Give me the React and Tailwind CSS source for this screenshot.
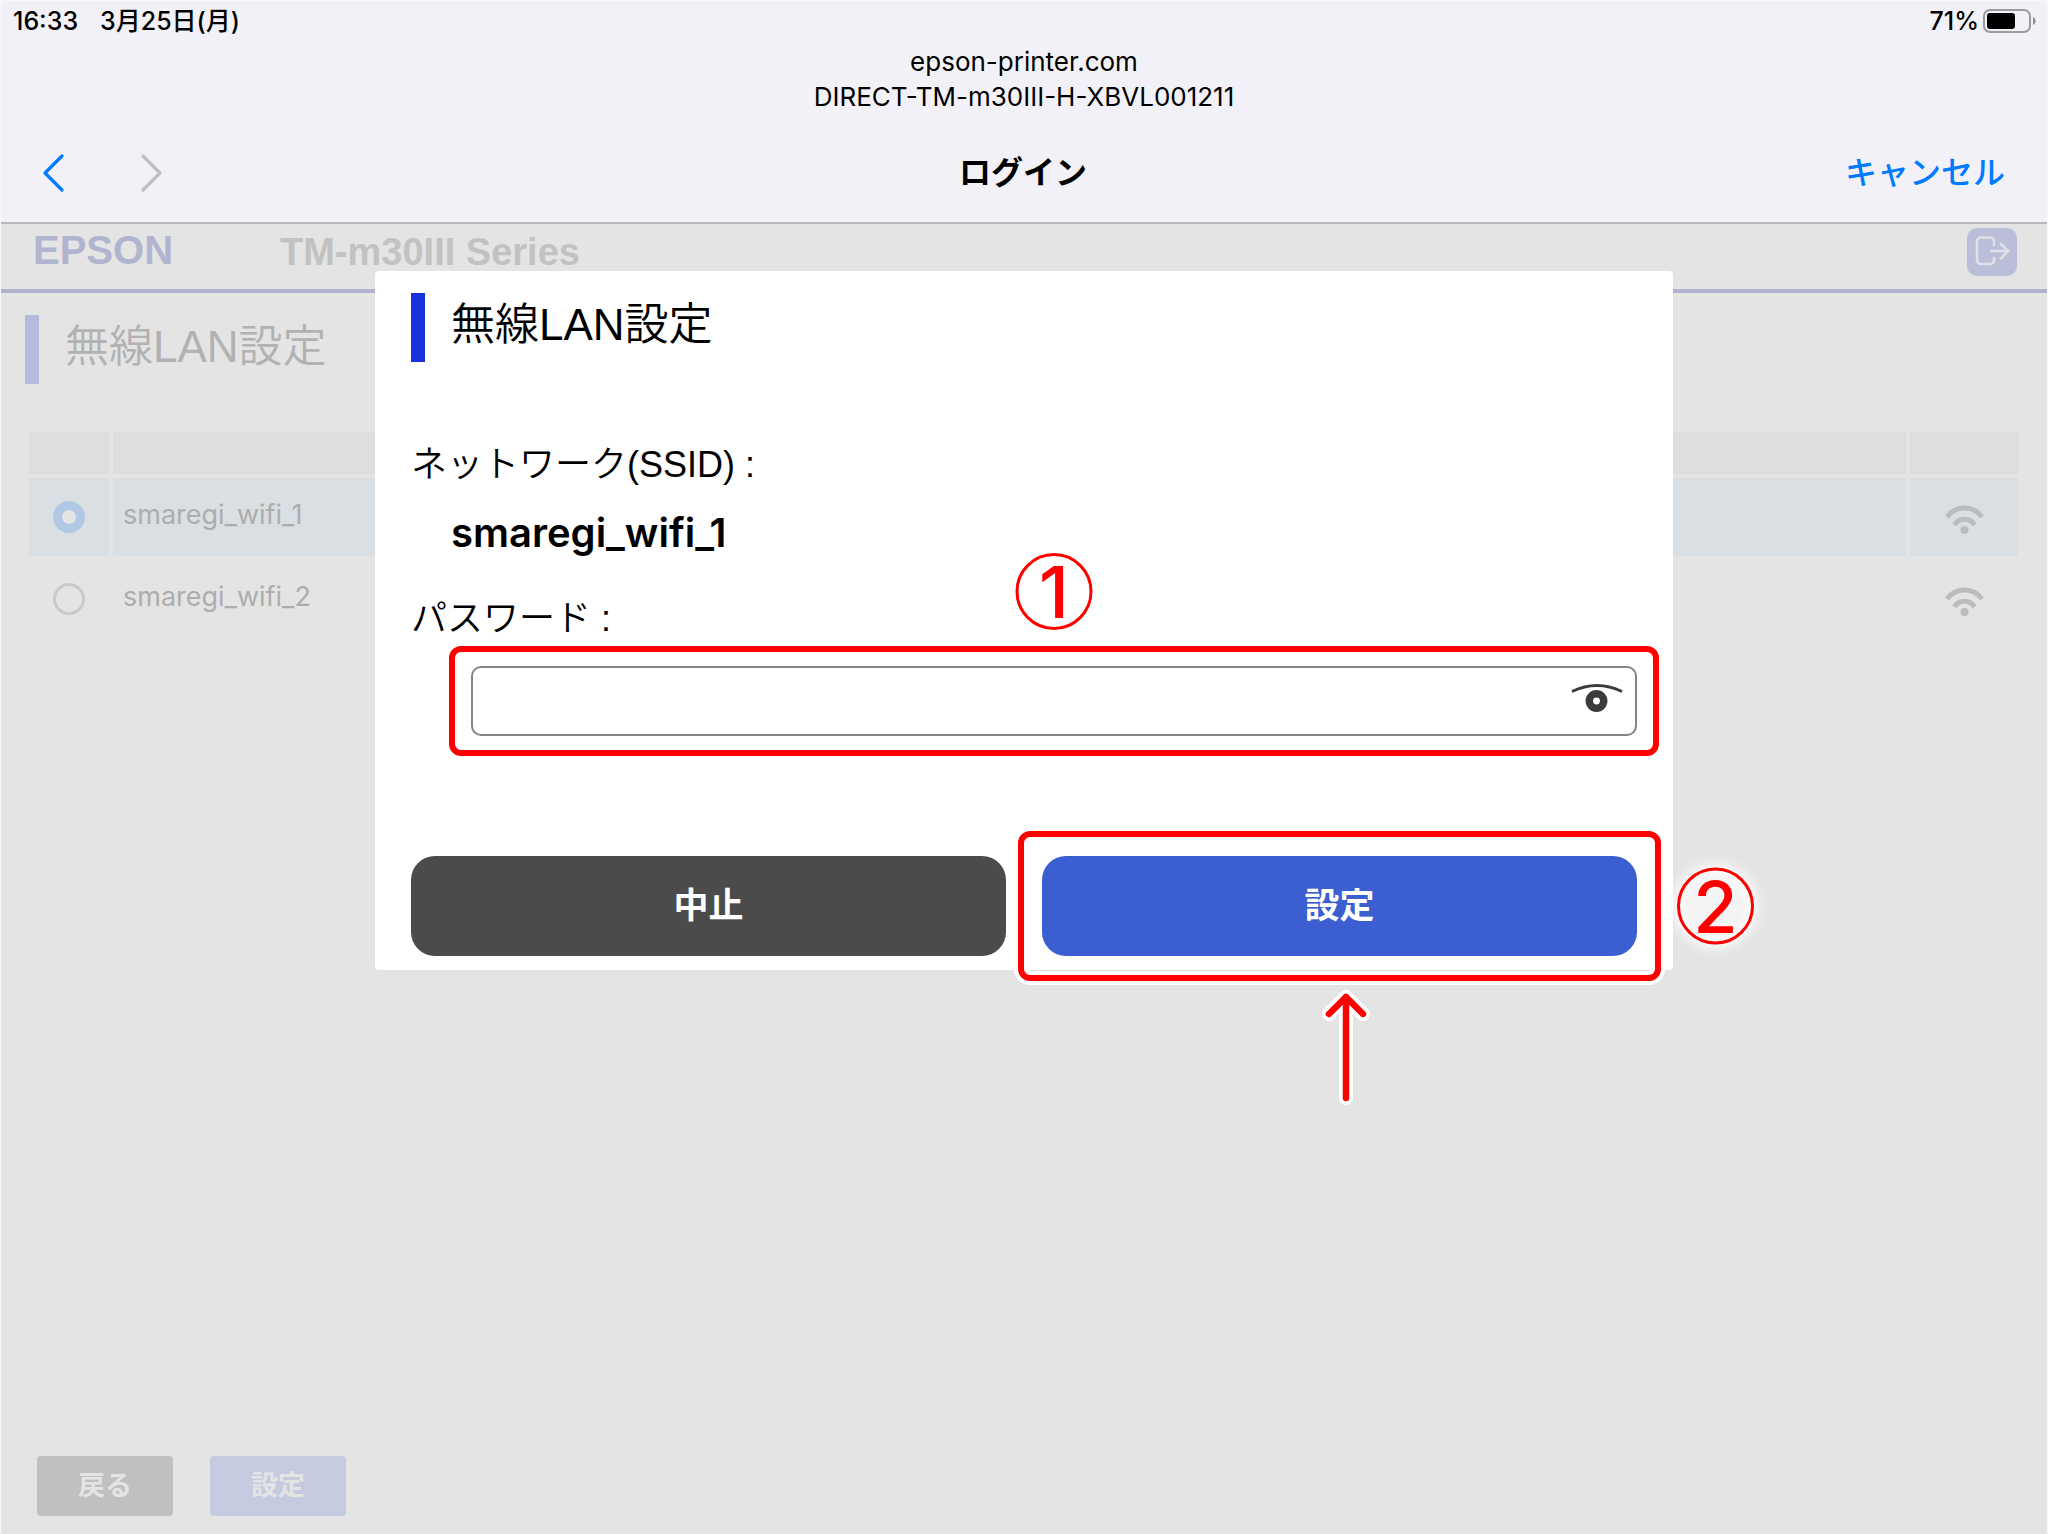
import React, { useState } from 'react';

const networks = [
  { id: 'smaregi_wifi_1', name: 'smaregi_wifi_1' },
  { id: 'smaregi_wifi_2', name: 'smaregi_wifi_2' },
];

const WifiIcon = () => (
  <svg width="39" height="30" viewBox="0 0 39 30" fill="none" stroke="#bcbcbc" strokeWidth="5" className="mx-auto mt-1.5">
    <path d="M2 12a21.5 21.5 0 0 1 35 0" />
    <path d="M9.5 20a11.5 11.5 0 0 1 20 0" />
    <circle cx="19.5" cy="25" r="4" fill="#bcbcbc" stroke="none" />
  </svg>
);

const LogoutIcon = () => (
  <svg width="50" height="48" viewBox="0 0 50 48" fill="none" stroke="#e0e0e6" strokeWidth="2.6" strokeLinecap="round" strokeLinejoin="round">
    <path d="M27 17v-3.5a4 4 0 0 0-4-4H14a4 4 0 0 0-4 4v18.5a4 4 0 0 0 4 4H23a4 4 0 0 0 4-4V30" />
    <path d="M24 23h17M34 16l7 7-7 7.5" />
  </svg>
);

const EyeIcon = () => (
  <svg width="52" height="30" viewBox="0 0 52 30" fill="none" stroke="#3b3b3b">
    <path d="M1 7.5Q26-4.5 51 7.5" strokeWidth="2.8" />
    <circle cx="25.5" cy="17" r="7.2" strokeWidth="7.5" />
  </svg>
);

const BatteryIcon = () => (
  <svg width="54" height="26" viewBox="0 0 54 26">
    <rect x="1" y="2" width="46" height="22" rx="6" fill="none" stroke="#9b9b9f" strokeWidth="2" />
    <rect x="4" y="5" width="28" height="16" rx="3" fill="#000" />
    <path d="M50 9c3.5 1.5 3.5 6.5 0 8z" fill="#8e8e92" />
  </svg>
);

const StatusBar = () => (
  <div className="flex items-center justify-between pl-3 pr-2.5 h-10 text-[25px] leading-8 font-medium">
    <div className="flex gap-[22px]">
      <span>16:33</span>
      <span>3月25日(月)</span>
    </div>
    <div className="flex items-center gap-1">
      <span>71%</span>
      <BatteryIcon />
    </div>
  </div>
);

const BrowserHeader = () => (
  <header className="bg-[#f2f1f7] border-b-2 border-[#b9b9bb] h-[223px] text-black font-[Inter,'Noto_Sans_CJK_JP',sans-serif]">
    <StatusBar />
    <div className="text-center text-[26px] leading-[35px] mt-[3px]">
      <p>epson-printer.com</p>
      <p>DIRECT-TM-m30III-H-XBVL001211</p>
    </div>
    <div className="grid grid-cols-3 items-center pl-10 pr-[42px] mt-[35px] h-12 text-[32px] leading-[48px]">
      <div className="flex gap-[74px]">
        <button type="button" aria-label="戻る">
          <svg width="24" height="40" viewBox="0 0 24 40" fill="none" stroke="#007aff" strokeWidth="3.2" strokeLinecap="round" strokeLinejoin="round">
            <path d="M21 3L4 20l17 17" />
          </svg>
        </button>
        <button type="button" aria-label="進む" disabled>
          <svg width="24" height="40" viewBox="0 0 24 40" fill="none" stroke="#bfbfc2" strokeWidth="3.2" strokeLinecap="round" strokeLinejoin="round">
            <path d="M4 3l17 17L4 37" />
          </svg>
        </button>
      </div>
      <h1 className="text-center font-bold">ログイン</h1>
      <button type="button" className="justify-self-end font-medium text-[#007aff]">
        キャンセル
      </button>
    </div>
  </header>
);

const PrinterPage = ({ selected, setSelected }) => (
  <div className="flex flex-1 flex-col">
    <div className="flex items-start h-[69px] pl-8 pr-[30px] border-b-4 border-[#b1b4ce] font-bold">
      <span className="w-[247px] text-[40px] leading-[52px] text-[#b1b4ce]">EPSON</span>
      <span className="flex-1 text-[38px] leading-[56px] text-[#c2c2c2]">TM-m30III Series</span>
      <button type="button" aria-label="ログアウト" className="mt-1 rounded-[10px] bg-[#babed8]">
        <LogoutIcon />
      </button>
    </div>

    <div className="flex h-[69px] mt-[22px] ml-6 gap-[26px]">
      <div className="w-3.5 bg-[#b6badf]" />
      <h2 className="text-[44px] leading-[64px] font-[350] text-[#b2b2b2]">無線LAN設定</h2>
    </div>

    <div className="mt-[44px] ml-6 mr-[25px]">
      <table className="w-full table-fixed border-separate border-spacing-1">
        <colgroup>
          <col className="w-20" />
          <col />
          <col className="w-[108px]" />
        </colgroup>
        <thead>
          <tr className="h-[42px] bg-[#dddddd]">
            <th />
            <th />
            <th />
          </tr>
        </thead>
        <tbody>
          {networks.map((network) => (
            <tr
              key={network.id}
              className={`h-[78px] ${selected === network.id ? 'bg-[#dadfe3]' : ''}`}
            >
              <td className="text-center">
                <input
                  type="radio"
                  id={network.id}
                  name="ssid"
                  checked={selected === network.id}
                  onChange={() => setSelected(network.id)}
                  className="block mx-auto size-8 appearance-none rounded-full border-3 border-[#c9c9c9] bg-[#e4e4e4] checked:border-9 checked:border-[#b0c8e4]"
                />
              </td>
              <td className="pl-2.5 pb-1">
                <label
                  htmlFor={network.id}
                  className="font-[Inter,sans-serif] text-[27px] leading-8 text-[#adadad]"
                >
                  {network.name}
                </label>
              </td>
              <td>
                <WifiIcon />
              </td>
            </tr>
          ))}
        </tbody>
      </table>
    </div>

    <div className="flex gap-[37px] mt-auto ml-9 mb-[18px] text-[27px] font-bold text-[#e4e4e4]">
      <button type="button" className="w-[136px] h-[60px] rounded bg-[#c0c0c0]">
        戻る
      </button>
      <button type="button" className="w-[136px] h-[60px] rounded bg-[#c5cadf]">
        設定
      </button>
    </div>
  </div>
);

// Red guide marks drawn over the dialog
const StepNumber = ({ children, className }) => (
  <span
    className={`absolute flex size-[77px] items-center justify-center rounded-full border-3 border-[#ff0000] text-[72px] leading-[72px] font-medium text-[#ff0000] font-[Inter,sans-serif] ${className}`}
  >
    {children}
  </span>
);

const GuideArrow = () => (
  <svg
    width="60"
    height="124"
    viewBox="0 0 60 124"
    fill="none"
    strokeLinecap="round"
    strokeLinejoin="round"
    className="absolute left-1/2 top-full -ml-6 mt-[29px]"
  >
    <path d="M30 113V12M13 29l17-17 17 17" stroke="#fff" strokeWidth="14" />
    <path d="M30 113V12M13 29l17-17 17 17" stroke="#ff0000" strokeWidth="6.5" />
  </svg>
);

const PasswordDialog = ({ ssid }) => {
  const [password, setPassword] = useState('');
  const [visible, setVisible] = useState(false);

  return (
    <div
      role="dialog"
      aria-labelledby="dialog-title"
      className="absolute top-[47px] inset-x-[374px] rounded bg-white px-9 pt-[22px] pb-3.5 text-black"
    >
      <div className="flex h-[69px] gap-[26px]">
        <div className="w-3.5 bg-[#1733de]" />
        <h2 id="dialog-title" className="text-[44px] leading-[64px] font-[350]">
          無線LAN設定
        </h2>
      </div>

      <p className="mt-[76px] text-[36px] leading-[54px] font-[350]">ネットワーク(SSID) :</p>
      <p className="mt-4 ml-10 text-[40px] leading-[50px] font-semibold font-[Inter,sans-serif]">
        {ssid}
      </p>
      <label htmlFor="password" className="block mt-[34px] text-[36px] leading-[54px] font-[350]">
        パスワード :
      </label>

      <div className="relative mt-5 ml-[60px]">
        <input
          id="password"
          type={visible ? 'text' : 'password'}
          value={password}
          onChange={(e) => setPassword(e.target.value)}
          className="block w-full h-[70px] pl-5 pr-20 rounded-[10px] border-2 border-[#858585] text-[32px]"
        />
        <button
          type="button"
          aria-label="パスワードを表示"
          onClick={() => setVisible(!visible)}
          className="absolute right-3.5 top-[18px]"
        >
          <EyeIcon />
        </button>
        <div className="pointer-events-none absolute -inset-x-[22px] -inset-y-5 rounded-xl border-6 border-[#ff0000]" />
        <StepNumber className="bottom-full left-1/2 -translate-x-1/2 mb-9">1</StepNumber>
      </div>

      <div className="flex gap-9 mt-[120px] text-[35px] font-bold text-white">
        <button type="button" className="flex-1 h-[100px] rounded-3xl bg-[#4b4b4b]">
          中止
        </button>
        <div className="relative flex-1">
          <button type="button" className="w-full h-[100px] rounded-3xl bg-[#3b5fd1]">
            設定
          </button>
          <div className="pointer-events-none absolute -inset-x-6 -inset-y-[25px] rounded-xl border-6 border-[#ff0000] shadow-[0_0_0_4px_#fff,inset_0_0_0_4px_#fff]" />
          <StepNumber className="left-full top-1/2 -translate-y-1/2 ml-10 bg-white/60 shadow-[0_0_14px_3px_#fff,inset_0_0_14px_#fff]">
            2
          </StepNumber>
          <GuideArrow />
        </div>
      </div>
    </div>
  );
};

const App = () => {
  const [selected, setSelected] = useState('smaregi_wifi_1');

  return (
    <div className="flex min-h-screen flex-col border-x border-t border-[#f8f8fa] bg-[#e4e4e4] font-['Liberation_Sans','Noto_Sans_CJK_JP',sans-serif]">
      <BrowserHeader />
      <main className="relative flex flex-1 flex-col">
        <PrinterPage selected={selected} setSelected={setSelected} />
        <PasswordDialog ssid={selected} />
      </main>
    </div>
  );
};

export default App;
